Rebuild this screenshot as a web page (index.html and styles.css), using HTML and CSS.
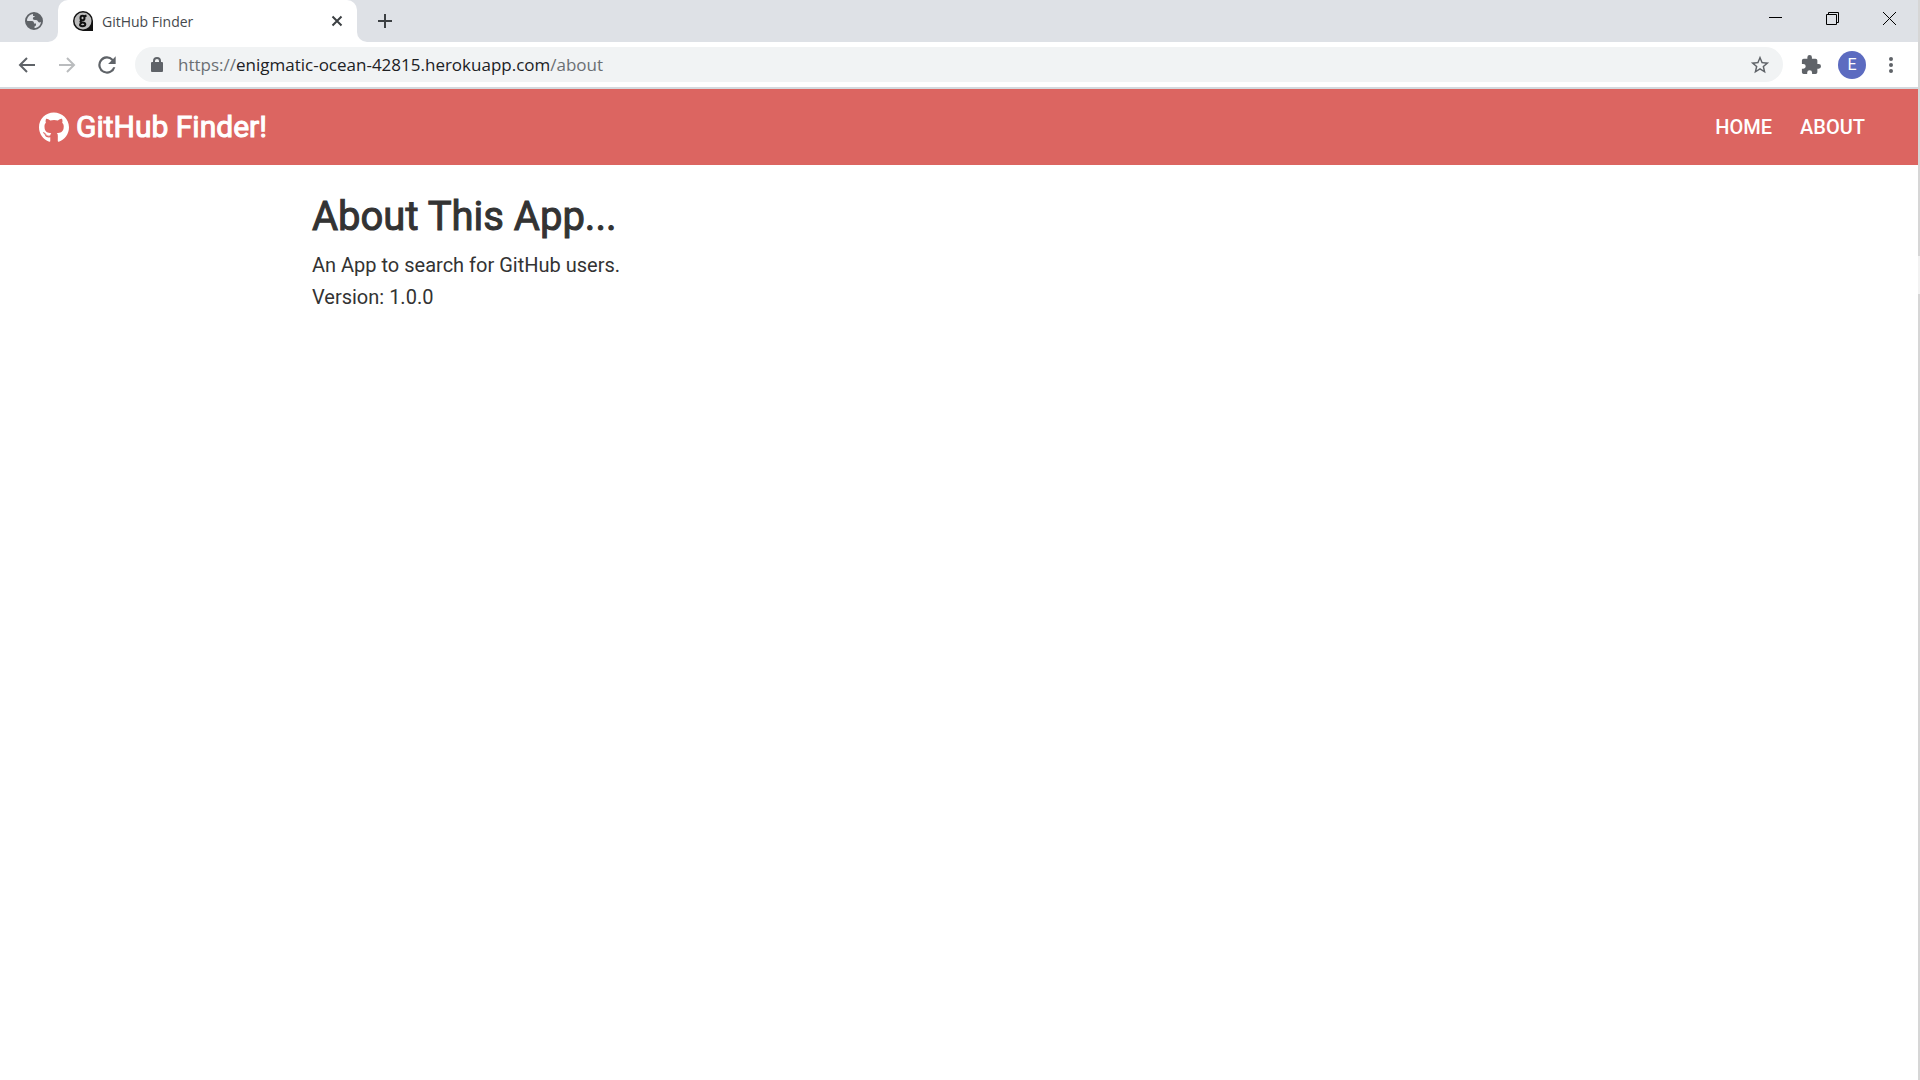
FILE: index.html
```html
<!DOCTYPE html>
<html lang="en">
<head>
<meta charset="utf-8">
<title>GitHub Finder</title>
<link rel="stylesheet" href="styles.css">
</head>
<body>
<div class="window">
 <div class="screen">
  <div class="browser">
    <div class="tab-strip">
      <button class="tab tab-pinned" aria-label="Pinned tab">
        <svg width="24" height="24" viewBox="0 0 24 24"><path fill="#5f6368" d="M12 3a9 9 0 1 0 0 18 9 9 0 0 0 0-18z"/><path fill="#dee1e6" d="M11 5c-3 .3-5.300 2.500-6 5.500 0 1 .2 1.500 1 1.500h4c1.500 0 2 1 2 2.500h2v1.500c0 1-1 1-1.500 1.500v1.500c3.500 0 6-2.500 6.500-6-1 .8-2.500.5-3-.5-.5-1.200-1.500-1.500-3-1.500-1.500 0-2.500-1-2-2.300.4-1 2-.7 2-1.700H11z"/></svg>
      </button>
      <div class="tab tab-active">
        <svg class="favicon" width="20" height="20" viewBox="0 0 20 20"><path d="M10 0a10 10 0 1 0 0 20h10V10A10 10 0 0 0 10 0z" fill="#111"/><circle cx="10" cy="10" r="8.500" fill="#bdbdbd"/><g fill="none" stroke="#111" stroke-width="2"><ellipse cx="9.500" cy="7" rx="2" ry="2.300"/><path d="M11 5.500l2.500-1M8.500 9.500c-2 1-1 2 1 2 4 0 3.500 3.700 0 3.700s-3-2.700-.5-3.200"/></g></svg>
        <span class="tab-title">GitHub Finder</span>
        <button class="tab-close" aria-label="Close tab"><svg width="12" height="12" viewBox="0 0 12 12"><path d="M1.500 1.500l9 9m0-9l-9 9" stroke="#3c4043" stroke-width="2"/></svg></button>
      </div>
      <button class="new-tab" aria-label="New tab"><svg width="16" height="16" viewBox="0 0 16 16"><path d="M8 1v14M1 8h14" stroke="#3c4043" stroke-width="2"/></svg></button>
      <div class="window-controls">
        <button aria-label="Minimize"><svg width="13" height="13" viewBox="0 0 13 13"><path d="M0 5.500h13" stroke="#000"/></svg></button>
        <button aria-label="Restore"><svg width="13" height="13" viewBox="0 0 13 13"><path d="M.5 2.500h10v10H.5zM2.500 2.500v-2h10v10h-2" fill="none" stroke="#000"/></svg></button>
        <button aria-label="Close"><svg width="13" height="13" viewBox="0 0 13 13"><path d="M0 0l13 13M13 0L0 13" stroke="#000"/></svg></button>
      </div>
    </div>
    <div class="toolbar">
      <button class="tool" aria-label="Back"><svg width="24" height="24" viewBox="0 0 24 24"><path d="M20 12H5m7-7l-7 7 7 7" fill="none" stroke="#5f6368" stroke-width="2"/></svg></button>
      <button class="tool" aria-label="Forward"><svg width="24" height="24" viewBox="0 0 24 24"><path d="M4 12h15m-7-7l7 7-7 7" fill="none" stroke="#babcbe" stroke-width="2"/></svg></button>
      <button class="tool" aria-label="Reload"><svg width="26" height="26" viewBox="0 0 24 24"><path fill="#5f6368" d="M17.650 6.350A8 8 0 1 0 19.730 14h-2.080A6 6 0 1 1 12 6c1.660 0 3.140.69 4.220 1.780L13 11h7V4z"/></svg></button>
      <div class="omnibox">
        <svg class="lock" width="12" height="16" viewBox="0 0 12 16"><rect x="0" y="5" width="12" height="10" rx="1" fill="#5f6368"/><path d="M3 6V4a3 3 0 0 1 6 0v2" fill="none" stroke="#5f6368" stroke-width="2"/></svg>
        <span class="url" role="textbox" aria-label="Address" contenteditable="true" spellcheck="false">https://<span class="host">enigmatic-ocean-42815.herokuapp.com</span>/about</span>
        <button class="bookmark" aria-label="Bookmark"><svg width="22" height="22" viewBox="0 0 24 24"><path fill="#5f6368" d="M22 9.240l-7.190-.62L12 2 9.190 8.630 2 9.240l5.460 4.730L5.820 21 12 17.270 18.180 21l-1.630-7.030L22 9.240zM12 15.400l-3.760 2.270 1-4.280-3.320-2.880 4.380-.38L12 6.100l1.710 4.040 4.380.38-3.320 2.880 1 4.280L12 15.400z"/></svg></button>
      </div>
      <button class="extensions" aria-label="Extensions"><svg width="20" height="20" viewBox="1 1 22 22"><path fill="#5f6368" d="M20.500 11H19V7a2 2 0 0 0-2-2h-4V3.500a2.500 2.500 0 0 0-5 0V5H4a2 2 0 0 0-2 2v3.800h1.500a2.700 2.700 0 0 1 0 5.400H2V20a2 2 0 0 0 2 2h3.800v-1.500a2.700 2.700 0 0 1 5.400 0V22H17a2 2 0 0 0 2-2v-4h1.500a2.500 2.500 0 0 0 0-5z"/></svg></button>
      <button class="avatar">E</button>
      <button class="menu" aria-label="Menu"><svg width="4" height="18" viewBox="0 0 4 18"><g fill="#5f6368"><circle cx="2" cy="3" r="2"/><circle cx="2" cy="9" r="2"/><circle cx="2" cy="15" r="2"/></g></svg></button>
    </div>
  </div>
  <nav class="navbar">
    <div class="brand">
      <svg width="30" height="31" viewBox="0 0 496 512"><path fill="#fff" d="M165.900 397.400c0 2-2.300 3.600-5.200 3.600-3.300.3-5.600-1.300-5.600-3.600 0-2 2.300-3.600 5.200-3.600 3-.3 5.600 1.300 5.600 3.600zm-31.100-4.500c-.7 2 1.300 4.300 4.300 4.900 2.600 1 5.600 0 6.200-2s-1.300-4.300-4.300-5.200c-2.600-.7-5.500.3-6.200 2.300zm44.200-1.700c-2.900.7-4.900 2.600-4.600 4.900.3 2 2.900 3.300 5.900 2.600 2.900-.7 4.900-2.600 4.600-4.600-.3-1.900-3-3.200-5.900-2.900zM244.800 8C106.100 8 0 113.300 0 252c0 110.900 69.800 205.800 169.500 239.200 12.800 2.300 17.300-5.600 17.300-12.100 0-6.200-.3-40.400-.3-61.400 0 0-70 15-84.700-29.800 0 0-11.400-29.100-27.800-36.600 0 0-22.900-15.700 1.600-15.400 0 0 24.900 2 38.600 25.800 21.900 38.600 58.600 27.500 72.900 20.900 2.300-16 8.800-27.100 16-33.700-55.900-6.200-112.300-14.300-112.300-110.500 0-27.500 7.600-41.300 23.600-58.900-2.600-6.500-11.100-33.300 2.600-67.900 20.900-6.500 69 27 69 27 20-5.600 41.500-8.500 62.800-8.500s42.800 2.900 62.800 8.500c0 0 48.100-33.600 69-27 13.700 34.700 5.200 61.400 2.600 67.900 16 17.700 25.800 31.500 25.800 58.900 0 96.500-58.900 104.200-114.800 110.500 9.200 7.900 17 22.900 17 46.400 0 33.700-.3 75.400-.3 83.600 0 6.500 4.600 14.400 17.300 12.100C428.200 457.800 496 362.900 496 252 496 113.300 383.500 8 244.800 8zM97.200 352.900c-1.300 1-1 3.300.7 5.200 1.600 1.600 3.900 2.300 5.200 1 1.300-1 1-3.300-.7-5.200-1.600-1.600-3.900-2.300-5.200-1zm-10.800-8.100c-.7 1.300.3 2.900 2.300 3.900 1.600 1 3.600.7 4.300-.7.7-1.300-.3-2.900-2.300-3.900-2-.6-3.600-.3-4.300.7zm32.400 35.600c-1.600 1.300-1 4.300 1.300 6.200 2.300 2.300 5.200 2.600 6.500 1 1.300-1.300.7-4.300-1.300-6.200-2.200-2.300-5.200-2.600-6.500-1zm-11.400-14.700c-1.600 1-1.600 3.600 0 5.900 1.600 2.300 4.300 3.300 5.600 2.300 1.600-1.300 1.600-3.900 0-6.200-1.400-2.300-4-3.300-5.600-2z"/></svg>
      <span>GitHub Finder!</span>
    </div>
    <div class="links"><a href="#">HOME</a><a href="#">ABOUT</a></div>
  </nav>
  <main class="container">
    <h1>About This App...</h1>
    <p>An App to search for GitHub users.</p>
    <p>Version: 1.0.0</p>
  </main>
 </div>
</div>
</body>
</html>
```
FILE: styles.css
```css
* { box-sizing: border-box; margin: 0; padding: 0; }
body { font-family: Roboto, sans-serif; font-size: 20px; line-height: 32px; color: #333; background: #fff; }
button { display: flex; align-items: center; justify-content: center; border: 0; background: none; flex: none; font: inherit; }
svg { display: block; flex: none; }
/* the window's edge shows as a thin strip on the right */
.window { min-height: 100vh; padding-right: 2px; background: linear-gradient(#d6d6d6 256px, #f2f2f2 256px 294px, #d6d6d6 294px); display: flex; }
.screen { flex: 1; background: #fff; }
.browser { border-bottom: 2px solid #d4d9de; }
.tab-strip { display: flex; height: 42px; background: #fff; }
.tab-pinned { width: 58px; padding-left: 10px; background: #dee1e6; border-bottom-right-radius: 10px; }
.tab-active { display: flex; align-items: center; width: 299px; padding: 0 14px 0 15px; background: linear-gradient(#dee1e6 50%, #fff 50%); position: relative; z-index: 0; }
.tab-active::before { content: ""; position: absolute; inset: 0; z-index: -1; background: #fff; border-radius: 10px 10px 0 0; }
.tab-title { flex: 1; margin-left: 9px; font: 14px "Open Sans", sans-serif; color: #45494d; }
.new-tab { width: 56px; background: #dee1e6; border-bottom-left-radius: 10px; }
.window-controls { display: flex; flex: 1; justify-content: flex-end; padding-bottom: 5px; background: #dee1e6; }
.window-controls button { width: 57px; }
.toolbar { display: flex; align-items: center; height: 45px; padding: 0 25px 0 7px; }
.tool { width: 40px; height: 40px; }
.omnibox { display: flex; align-items: center; flex: 1; height: 35px; margin-left: 8px; padding: 0 12px 0 16px; background: #f1f3f4; border-radius: 18px; }
.url { flex: 1; margin-left: 15px; font: 17px "Open Sans", sans-serif; color: #6b6f73; }
.host { color: #202124; }
.extensions { width: 20px; margin-left: 18px; }
.avatar { width: 28px; height: 28px; margin: 0 23px 0 17px; border-radius: 50%; background: #5c6bc0; color: #fff; font: 16px Roboto, sans-serif; }
.navbar { display: flex; align-items: center; justify-content: space-between; height: 76px; padding: 0 39px; background: #dc6561; color: #fff; }
.brand { display: flex; align-items: center; gap: 7px; font-size: 30px; -webkit-text-stroke: 1px #fff; }
.links { display: flex; }
.links a { padding: 0 14px; color: #fff; text-decoration: none; font-weight: 500; }
.container { max-width: 1374px; margin: 0 auto; padding: 28px 40px; }
h1 { font-size: 40px; font-weight: 400; line-height: 48px; margin-bottom: 8px; -webkit-text-stroke: 1px #333; }
```
